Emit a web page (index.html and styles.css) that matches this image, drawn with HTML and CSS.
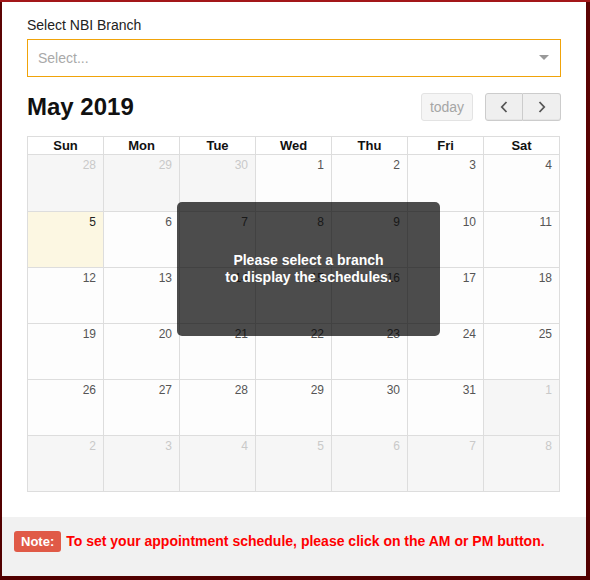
FILE: index.html
```html
<!DOCTYPE html>
<html>
<head>
<meta charset="utf-8">
<link rel="stylesheet" href="styles.css">
</head>
<body>
<div class="frame">
  <div class="panel">
    <div class="content">
      <label class="field-label">Select NBI Branch</label>
      <div class="select">
        <span class="placeholder">Select...</span>
        <span class="arrow"></span>
      </div>
      <div class="toolbar">
        <h2 class="title">May 2019</h2>
        <div class="actions">
          <button class="btn today" disabled>today</button>
          <div class="btn-group">
            <button class="btn nav"><svg width="8" height="12" viewBox="0 0 8 12"><path d="M6.5 1 L1.8 6 L6.5 11" fill="none" stroke="#555" stroke-width="1.8"/></svg></button>
            <button class="btn nav"><svg width="8" height="12" viewBox="0 0 8 12"><path d="M1.5 1 L6.2 6 L1.5 11" fill="none" stroke="#555" stroke-width="1.8"/></svg></button>
          </div>
        </div>
      </div>
      <div class="calendar">
        <table class="grid">
          <thead>
            <tr><th>Sun</th><th>Mon</th><th>Tue</th><th>Wed</th><th>Thu</th><th>Fri</th><th>Sat</th></tr>
          </thead>
          <tbody>
            <tr class="first-week"><td class="other">28</td><td class="other">29</td><td class="other">30</td><td>1</td><td>2</td><td>3</td><td>4</td></tr>
            <tr><td class="today-cell">5</td><td>6</td><td>7</td><td>8</td><td>9</td><td>10</td><td>11</td></tr>
            <tr><td>12</td><td>13</td><td>14</td><td>15</td><td>16</td><td>17</td><td>18</td></tr>
            <tr><td>19</td><td>20</td><td>21</td><td>22</td><td>23</td><td>24</td><td>25</td></tr>
            <tr><td>26</td><td>27</td><td>28</td><td>29</td><td>30</td><td>31</td><td class="other">1</td></tr>
            <tr><td class="other">2</td><td class="other">3</td><td class="other">4</td><td class="other">5</td><td class="other">6</td><td class="other">7</td><td class="other">8</td></tr>
          </tbody>
        </table>
        <div class="overlay">Please select a branch<br>to display the schedules.</div>
      </div>
    </div>
    <div class="note-bar">
      <span class="badge">Note:</span>
      <span class="note-text">To set your appointment schedule, please click on the AM or PM button.</span>
    </div>
  </div>
</div>
</body>
</html>
```
FILE: styles.css
```css
html, body {
  margin: 0;
  padding: 0;
}
body {
  background: #560303;
  font-family: "Liberation Sans", Arial, sans-serif;
  color: #333;
}
.frame {
  width: 590px;
  height: 580px;
  box-sizing: border-box;
  padding: 2px 4px 4px 2px;
  background: linear-gradient(to bottom, #a31719 0, #a31719 2px, #5c0404 2px, #520000 100%);
}
.panel {
  background: #fff;
  height: 574px;
  display: flex;
  flex-direction: column;
}
.content {
  padding: 15px 25px 0 25px;
  flex: 1;
}
.field-label {
  display: block;
  font-size: 14px;
  line-height: 16px;
  color: #222;
  margin-bottom: 6px;
}
.select {
  height: 38px;
  box-sizing: border-box;
  border: 1px solid #f0a30a;
  display: flex;
  align-items: center;
  justify-content: space-between;
  padding: 0 11px 0 10px;
}
.placeholder {
  font-size: 14px;
  color: #a9a9a9;
}
.arrow {
  width: 0;
  height: 0;
  border-left: 5px solid transparent;
  border-right: 5px solid transparent;
  border-top: 5px solid #999;
  margin-top: -2px;
}
.toolbar {
  display: flex;
  justify-content: space-between;
  align-items: center;
  margin-top: 16px;
  height: 28px;
}
.title {
  margin: 0;
  font-size: 24px;
  font-weight: bold;
  color: #111;
  line-height: 28px;
}
.actions {
  display: flex;
  gap: 12px;
}
.btn {
  font-family: "Liberation Sans", Arial, sans-serif;
  height: 28px;
  box-sizing: border-box;
  border: 1px solid #ccc;
  background: #efefef;
  border-radius: 3px;
  padding: 0;
  margin: 0;
  display: flex;
  align-items: center;
  justify-content: center;
}
.today {
  width: 52px;
  font-size: 14px;
  color: #a6a6a6;
  background: #f5f5f5;
  border-color: #e3e3e3;
}
.btn-group {
  display: flex;
}
.nav {
  width: 38px;
  box-shadow: inset 0 -1px 0 rgba(0,0,0,0.04);
}
.nav:first-child {
  border-radius: 3px 0 0 3px;
}
.nav:last-child {
  border-radius: 0 3px 3px 0;
  border-left: none;
}
.calendar {
  position: relative;
  margin-top: 15px;
}
.grid {
  width: 533px;
  border-collapse: collapse;
  table-layout: fixed;
}
.grid th {
  border: 1px solid #ddd;
  height: 17px;
  padding: 0;
  font-size: 13px;
  font-weight: bold;
  color: #111;
  line-height: 16px;
}
.grid td {
  border: 1px solid #ddd;
  height: 56px;
  vertical-align: top;
  text-align: right;
  padding: 2px 7px 0 0;
  font-size: 12px;
  line-height: 16px;
  color: #555;
  background: #fdfdfd;
  box-sizing: border-box;
}
.grid .first-week td {
  height: 57px;
}
.grid td.other {
  background: #f6f6f6;
  color: #c9c9c9;
}
.grid td.today-cell {
  background: #fcf7e2;
  color: #222;
}
.overlay {
  position: absolute;
  left: 150px;
  top: 66px;
  width: 263px;
  height: 134px;
  background: rgba(0, 0, 0, 0.7);
  border-radius: 5px;
  color: #fff;
  font-weight: bold;
  font-size: 14px;
  line-height: 17px;
  display: flex;
  align-items: center;
  justify-content: center;
  text-align: center;
}
.note-bar {
  background: #f1f1f1;
  height: 59px;
  box-sizing: border-box;
  padding: 14px 12px 0 12px;
  display: flex;
  align-items: flex-start;
  gap: 5px;
}
.badge {
  background: #e05a47;
  color: #fff;
  font-weight: bold;
  font-size: 13px;
  height: 21px;
  line-height: 21px;
  padding: 0 7px;
  border-radius: 3px;
}
.note-text {
  color: #f00;
  font-weight: bold;
  font-size: 14px;
  line-height: 21px;
}
```
